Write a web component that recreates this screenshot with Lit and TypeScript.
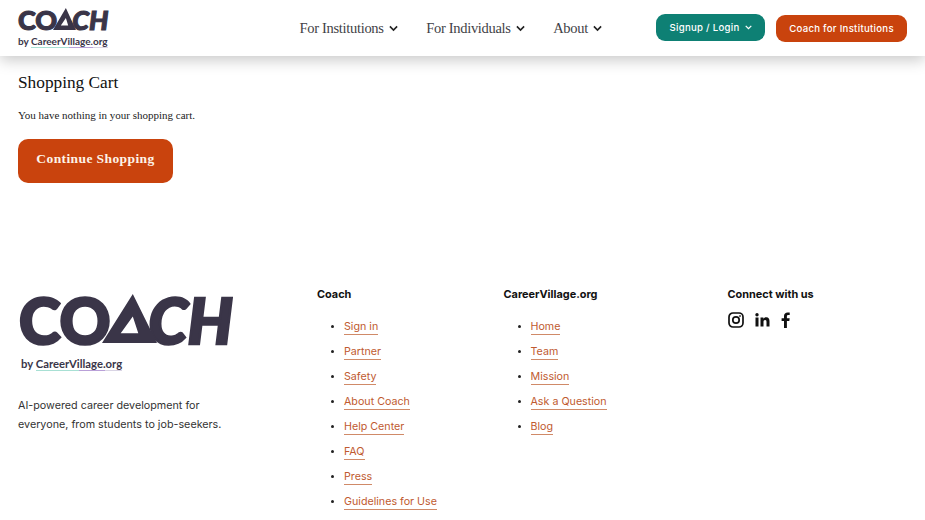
import {LitElement, html, css, svg} from 'lit';
import {customElement} from 'lit/decorators.js';

const chevron = html`<svg class="chev" viewBox="0 0 10 7" width="9" height="7"><path d="M1 1.2l4 4 4-4" fill="none" stroke="currentColor" stroke-width="1.8"/></svg>`;

// triangle that stands in for the A of the wordmark
const delta = svg`<path fill-rule="evenodd" d="M56 0L100 100H0ZM56 46L34 80H66Z" fill="#3a3548"/>`;

const coachLinks = ['Sign in', 'Partner', 'Safety', 'About Coach', 'Help Center', 'FAQ', 'Press', 'Guidelines for Use'];
const villageLinks = ['Home', 'Team', 'Mission', 'Ask a Question', 'Blog'];

@customElement('app-root')
export class AppRoot extends LitElement {
  static styles = css`
    :host {
      display: block;
      height: 520px;
      overflow: hidden;
      background: #fff;
      color: #111;
      font-family: "Inter", "Liberation Sans", sans-serif;
    }
    a { text-decoration: none; color: inherit; }

    header {
      height: 56px;
      display: flex;
      align-items: center;
      padding: 0 18px;
      box-shadow: 0 4px 14px rgba(0, 0, 0, 0.22);
      position: relative;
    }
    .logo { display: flex; flex-direction: column; align-items: flex-start; }
    .mark {
      display: flex;
      align-items: flex-end;
      font-family: "Lato", sans-serif;
      font-weight: 900;
      color: #3a3548;
    }
    .mark i { font-style: italic; }
    .mark svg { display: block; position: relative; }
    .head-logo .mark {
      font-size: 27px;
      line-height: 21px;
      height: 21px;
      letter-spacing: 0;
      -webkit-text-stroke: 1.1px #3a3548;
    }
    .head-logo .mark svg { width: 23px; height: 22px; margin: 0 -4px 0 -4px; }
    .by {
      font-family: "Lato", sans-serif;
      font-weight: 700;
      color: #3a3548;
    }
    .by span {
      padding-bottom: 1px;
      background: linear-gradient(90deg, #a8e0d4 0 50%, #b9a0d8 50% 80%, #d9d4e4 80%) no-repeat left bottom / 100% 1px;
    }
    .head-logo .by { font-size: 10px; margin-top: 5px; line-height: 12px; }

    nav {
      display: flex;
      margin-left: 191px;
      gap: 28.5px;
      font-family: "Liberation Serif", serif;
      font-size: 14.5px;
      letter-spacing: -0.3px;
      color: #3f3f46;
    }
    nav a { display: flex; align-items: center; gap: 5px; }
    .chev { color: #222; }

    .actions { display: flex; gap: 11px; margin-left: auto; align-items: center; }
    .pill {
      display: flex;
      align-items: center;
      justify-content: center;
      gap: 5px;
      height: 27px;
      border-radius: 9px;
      color: #fff;
      font-size: 9.6px;
      font-weight: 500;
      letter-spacing: 0.03em;
    }
    .teal { width: 109px; background: #0e8074; margin-top: -1px; }
    .teal .chev { color: #fff; width: 7px; height: 5px; }
    .rust { width: 131px; background: #c9430d; }

    main { padding: 17px 18px 0; height: 210px; }
    h1 {
      margin: 0;
      font-family: "Liberation Serif", serif;
      font-weight: 400;
      font-size: 17.3px;
      line-height: 20px;
    }
    main p {
      margin: 13px 0 0;
      font-family: "Liberation Serif", serif;
      font-size: 11px;
      line-height: 19px;
      color: #222;
    }
    .cta {
      display: flex;
      align-items: center;
      justify-content: center;
      box-sizing: border-box;
      width: 155px;
      height: 44px;
      margin-top: 14px;
      padding-bottom: 4px;
      border-radius: 10px;
      background: #c9430d;
      color: #fdf3e8;
      font-family: "Liberation Serif", serif;
      font-weight: 700;
      font-size: 13.5px;
      letter-spacing: 0.03em;
    }

    footer {
      display: grid;
      grid-template-columns: 299px 186.5px 224px 1fr;
      padding: 0 18px;
      margin-top: 4px;
    }
    .foot-logo { padding: 9px 0 0 1px; }
    .foot-logo .mark {
      font-size: 63px;
      line-height: 47px;
      height: 47px;
      letter-spacing: 0;
      -webkit-text-stroke: 2.6px #3a3548;
    }
    .foot-logo .mark svg { width: 55px; height: 49px; margin: 0 -8px 0 -9px; }
    .foot-logo .by { font-size: 11.3px; line-height: 14px; margin: 14px 0 0 2px; }
    .blurb {
      margin: 25px 0 0;
      font-size: 10.75px;
      line-height: 19px;
      color: #333;
    }
    h2 {
      margin: 0;
      font-size: 10.9px;
      font-weight: 700;
      line-height: 14px;
      color: #111;
    }
    ul { margin: 13px 0 0; padding: 0 0 0 27px; }
    li { height: 25px; line-height: 25px; font-size: 10.7px; color: #222; }
    li::marker { font-size: 9px; }
    li a {
      color: #c05a30;
      border-bottom: 1px solid #d08a68;
      padding-bottom: 1px;
    }
    .social { display: flex; align-items: center; gap: 11px; margin-top: 11px; }
    .social svg { display: block; }
  `;

  renderLogo(cls: string) {
    return html`
      <div class="logo ${cls}">
        <div class="mark">CO<svg viewBox="0 0 100 100" preserveAspectRatio="none">${delta}</svg><i>CH</i></div>
        <div class="by">by <span>CareerVillage.org</span></div>
      </div>
    `;
  }

  render() {
    return html`
      <header>
        ${this.renderLogo('head-logo')}
        <nav>
          <a href="#">For Institutions ${chevron}</a>
          <a href="#">For Individuals ${chevron}</a>
          <a href="#">About ${chevron}</a>
        </nav>
        <div class="actions">
          <a class="pill teal" href="#">Signup / Login ${chevron}</a>
          <a class="pill rust" href="#">Coach for Institutions</a>
        </div>
      </header>
      <main>
        <h1>Shopping Cart</h1>
        <p>You have nothing in your shopping cart.</p>
        <a class="cta" href="#">Continue Shopping</a>
      </main>
      <footer>
        <div>
          <div class="foot-logo">${this.renderLogo('')}</div>
          <p class="blurb">AI-powered career development for<br>everyone, from students to job-seekers.</p>
        </div>
        <div>
          <h2>Coach</h2>
          <ul>${coachLinks.map((l) => html`<li><a href="#">${l}</a></li>`)}</ul>
        </div>
        <div>
          <h2>CareerVillage.org</h2>
          <ul>${villageLinks.map((l) => html`<li><a href="#">${l}</a></li>`)}</ul>
        </div>
        <div>
          <h2>Connect with us</h2>
          <div class="social">
            <svg width="16" height="16" viewBox="0 0 16 16" fill="none" stroke="#111" stroke-width="1.7"><rect x="1" y="1" width="14" height="14" rx="4"/><circle cx="8" cy="8" r="3.2"/><circle cx="12" cy="4" r=".6" fill="#111" stroke-width=".6"/></svg>
            <svg width="15" height="14" viewBox="0 0 15 14" fill="#111"><rect x="0.5" y="4.5" width="3" height="9"/><circle cx="2" cy="1.8" r="1.7"/><path d="M5.5 4.5h2.9v1.3c.5-.9 1.5-1.5 2.8-1.5 2.6 0 3.3 1.7 3.3 4.1v5.1h-3V9c0-1.1-.2-2-1.4-2-1.2 0-1.6.9-1.6 2v4.5h-3z"/></svg>
            <svg width="10" height="16" viewBox="0 0 10 16" fill="#111"><path d="M3 16V9H.6V6.2H3V4.1C3 1.6 4.5.4 6.6.4c1 0 1.9.1 2.1.1v2.500H7.300c-1.100 0-1.400.6-1.400 1.300v1.900h2.800L8.300 9H5.900v7z"/></svg>
          </div>
        </div>
      </footer>
    `;
  }
}
